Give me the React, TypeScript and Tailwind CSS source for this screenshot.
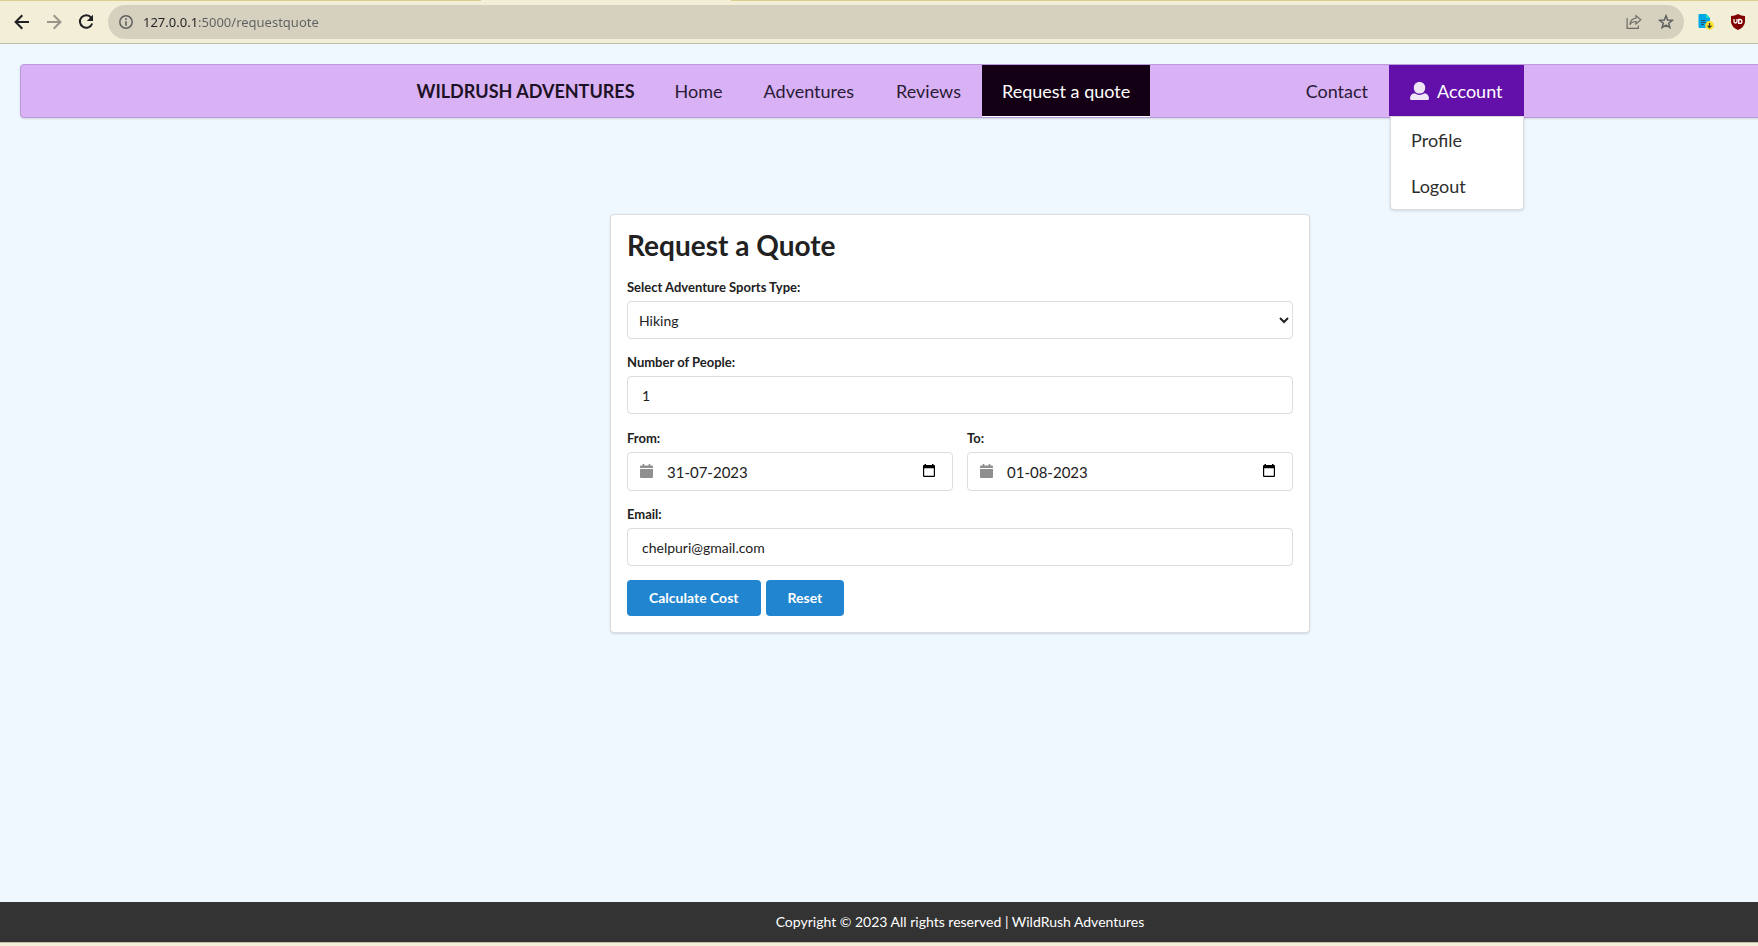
import React, { useState } from "react";

const CalendarSolid = () => (
  <svg viewBox="0 0 13 14" className="h-3.5 w-[13px] shrink-0 fill-[#8f8f8f]" aria-hidden="true">
    <path d="M0 4V2.6Q0 1.5 1.1 1.5H2.6V.4Q2.6 0 3 0h1q.4 0 .4.4V1.5H8.6V.4Q8.6 0 9 0h1q.4 0 .4.4V1.5H11.900Q13 1.500 13 2.600V4z" />
    <path d="M0 5H13V12.900Q13 14 11.900 14H1.100Q0 14 0 12.900z" />
  </svg>
);

const PickerIcon = () => (
  <svg viewBox="0 0 12 13" className="h-[13px] w-3" aria-hidden="true">
    <path d="M1.500 0H3V1H9V0h1.500V1H11q1 0 1 1V12q0 1-1 1H1q-1 0-1-1V2Q0 1 1 1h.5zM1.200 4.200V11.800H10.800V4.200z" fillRule="evenodd" />
  </svg>
);

function BrowserBar() {
  return (
    <header className="border-b border-[#bfbca9] bg-[#f3eed8]">
      <div className="flex h-px justify-between">
        <div className="w-[481px] bg-[#dccf8b]" />
        <div className="ml-[250px] flex-1 bg-[#dccf8b]" />
      </div>
      <div className="flex h-[42px] items-center py-1 pr-3 pl-3.5">
        <button aria-label="Back" className="mr-4 h-4 w-4">
          <svg viewBox="0 0 16 16" className="h-4 w-4 fill-none stroke-[#202124] stroke-2"><path d="M15 8H2M8.300 1.300 1.600 8l6.700 6.700" /></svg>
        </button>
        <button aria-label="Forward" className="mr-4 h-4 w-4">
          <svg viewBox="0 0 16 16" className="h-4 w-4 fill-none stroke-[#98958a] stroke-2"><path d="M1 8H14M7.700 1.300 14.400 8l-6.700 6.700" /></svg>
        </button>
        <button aria-label="Reload" className="mr-3.5 h-4 w-4">
          <svg viewBox="0 0 16 16" className="h-4 w-4"><path d="M13.200 3.600A6.300 6.300 0 1 0 14.200 9.500" className="fill-none stroke-[#202124] stroke-2" /><path d="M15 .8V7H8.800z" className="fill-[#202124]" /></svg>
        </button>
        <div className="flex h-[34px] flex-1 items-center rounded-full bg-[#d5d1be] pr-2.5 pl-[11px]">
          <svg viewBox="0 0 14 14" className="h-3.5 w-3.5 shrink-0" aria-hidden="true">
            <circle cx="7" cy="7" r="6.200" className="fill-none stroke-[#5f6062] [stroke-width:1.500]" />
            <path d="M6.200 3.300h1.600v1.600H6.200zM6.200 6.200h1.600v4.500H6.200z" className="fill-[#5f6062]" />
          </svg>
          <input
            aria-label="Address"
            defaultValue="127.0.0.1:5000/requestquote"
            className="ml-2.5 flex-1 bg-[linear-gradient(to_right,#202124_53px,#5f6062_53px)] bg-clip-text font-['Noto_Sans',sans-serif] text-[13px] leading-5 text-transparent caret-black outline-none"
          />
          <button aria-label="Share" className="mr-4 h-4 w-4">
            <svg viewBox="0 0 16 16" className="h-4 w-4 fill-none stroke-[#6d6d67] [stroke-width:1.200]"><path d="M1.100 4V14.400H12.400V11.500M10 1.600 14.800 5.800 10 10V7.500C7 7.500 5.200 8.400 4 10.700 4.300 6.800 6.500 4.600 10 4.200z" /></svg>
          </button>
          <button aria-label="Bookmark" className="h-4 w-4">
            <svg viewBox="0 0 16 16" className="h-4 w-4 fill-none stroke-[#5f6062] [stroke-width:1.500]"><path d="M8 1.800 9.600 6 14.300 6.300 10.700 9.200 11.900 13.700 8 11.200 4.100 13.700 5.300 9.200 1.700 6.300 6.400 6z" /></svg>
          </button>
        </div>
        <button aria-label="Save page" className="ml-3.5 h-4 w-4">
          <svg viewBox="0 0 16 16" className="h-4 w-4">
            <path d="M1.500 0H8l4 4v10H1.500Q.5 14 .5 13V1Q.5 0 1.500 0z" fill="#00a8e8" />
            <path d="M8 0l4 4H8z" fill="#12e0c8" />
            <path d="M3 6.500h4.500M3 8.500h4.500M3 10.500h3" stroke="#28506b" />
            <circle cx="11.500" cy="11.500" r="4.400" fill="#fbe030" />
            <path d="M11.500 9v4.500M9.500 11.700l2 2 2-2" stroke="#333" strokeWidth="1.200" fill="none" />
          </svg>
        </button>
        <button aria-label="Shield" className="ml-4 h-4 w-4">
          <svg viewBox="0 0 16 16" className="h-4 w-4">
            <path d="M8 0Q11 2 15 2V8Q14.500 13 8 16 1.500 13 1 8V2Q5 2 8 0z" fill="#800000" />
            <path d="M4 5v2.500a1.500 1.500 0 0 0 3 0V5M8.700 5.500h1.300a1.900 1.900 0 0 1 0 3.800H8.700z" fill="none" stroke="#fff" strokeWidth="1.300" />
          </svg>
        </button>
      </div>
    </header>
  );
}

const item = "flex h-[51px] items-center";

function NavBar() {
  return (
    <nav className="mx-5 mt-5 h-[54px] rounded border border-[#bb9bd9] bg-[#d8b2f4] text-lg text-[#2a1a36] shadow-[0_1px_2px_0_rgba(34,36,38,0.15)]">
      <div className="mx-auto flex max-w-[1127px]">
        <a href="#top" className={`${item} px-5 font-bold text-[#1d1126]`}>WILDRUSH ADVENTURES</a>
        <a href="#home" className={`${item} px-5`}>Home</a>
        <a href="#adventures" className={`${item} px-[21px]`}>Adventures</a>
        <a href="#reviews" className={`${item} px-[21px]`}>Reviews</a>
        <a href="#quote" className="border-b border-white bg-[#140014] text-white"><span className={`${item} px-5`}>Request a quote</span></a>
        <a href="#contact" className={`${item} ml-auto px-[21px]`}>Contact</a>
        <div className="relative">
          <button className={`${item} bg-[#6210a9] px-[21px] text-white`}>
            <svg viewBox="0 0 19 18" className="mr-2 h-[18px] w-[19px] fill-[#efe7f6]" aria-hidden="true">
              <path d="M9.500 0C13 0 15.200 2.400 15.200 5.700S13 11.600 9.500 11.600 3.800 9 3.800 5.700 6 0 9.500 0z" />
              <path d="M0 16.500C0 13.500 2 11.500 4.500 11.300Q9.500 14.500 14.500 11.300C17 11.500 19 13.500 19 16.500Q19 18 17.500 18H1.500Q0 18 0 16.500z" />
            </svg>
            Account
          </button>
          <div className="absolute top-[51px] right-0 left-px rounded-b border border-[#dcddde] bg-white text-[#2e2e2e] shadow-[0_1px_3px_0_rgba(34,36,38,0.15)]">
            <a href="#profile" className="flex h-[46px] items-center px-5">Profile</a>
            <a href="#logout" className="flex h-[46px] items-center px-5">Logout</a>
          </div>
        </div>
      </div>
    </nav>
  );
}

const box = "rounded border border-[#dcdddd] bg-white text-sm";
const labelStyle = "mb-[5px] block text-[13px] leading-[18px] font-bold";

function DateField({ id, label, initial }: { id: string; label: string; initial: string }) {
  const [value, setValue] = useState(initial);
  return (
    <div className="flex-1">
      <label htmlFor={id} className={labelStyle}>{label}</label>
      <div className={`${box} flex h-[39px] items-center pr-[17px] pb-0.5 pl-3`}>
        <CalendarSolid />
        <input id={id} value={value} onChange={(e) => setValue(e.target.value)} className="ml-3.5 w-0 flex-1 pt-1 text-[15px] outline-none" />
        <button type="button" aria-label={`Open calendar, ${label}`}><PickerIcon /></button>
      </div>
    </div>
  );
}

const action = "h-9 rounded bg-[#2185d0] px-[22px] text-sm font-bold text-white";

function QuoteForm() {
  return (
    <form onSubmit={(e) => e.preventDefault()} className="mx-auto mt-24 w-[700px] rounded border border-[#dadcde] bg-white px-4 pt-[15px] pb-4 shadow-[0_1px_2px_0_rgba(34,36,38,0.15)]">
      <h1 className="mb-[18px] text-[28px] leading-[30px] font-bold">Request a Quote</h1>
      <label htmlFor="sport" className={labelStyle}>Select Adventure Sports Type:</label>
      <select id="sport" className={`${box} mb-3.5 h-[38px] w-full pr-[9px] pl-[7px]`}>
        <option>Hiking</option>
        <option>Rafting</option>
        <option>Paragliding</option>
      </select>
      <label htmlFor="people" className={labelStyle}>Number of People:</label>
      <input id="people" type="number" defaultValue={1} className={`${box} mb-[15px] h-[38px] w-full px-3.5`} />
      <div className="mb-3.5 flex gap-3.5">
        <DateField id="from" label="From:" initial="31-07-2023" />
        <DateField id="to" label="To:" initial="01-08-2023" />
      </div>
      <label htmlFor="email" className={labelStyle}>Email:</label>
      <input id="email" type="email" defaultValue="chelpuri@gmail.com" className={`${box} mb-3.5 h-[38px] w-full px-3.5`} />
      <div className="flex gap-[5px]">
        <button type="submit" className={action}>Calculate Cost</button>
        <button type="reset" className={action}>Reset</button>
      </div>
    </form>
  );
}

export default function App() {
  return (
    <div className="flex min-h-screen flex-col overflow-hidden bg-[#eff7ff] font-[Lato,sans-serif] text-[#212121]">
      <BrowserBar />
      <div className="flex w-[calc(100%+162px)] flex-1 flex-col">
        <NavBar />
        <main className="mb-10">
          <QuoteForm />
        </main>
        <footer className="mt-auto flex h-10 items-center justify-center bg-[#333333] text-sm text-white">
          <p>Copyright © 2023 All rights reserved | WildRush Adventures</p>
        </footer>
      </div>
      <div className="h-1 border-t border-[#bfbca9] bg-[#f3eed8]" />
    </div>
  );
}
